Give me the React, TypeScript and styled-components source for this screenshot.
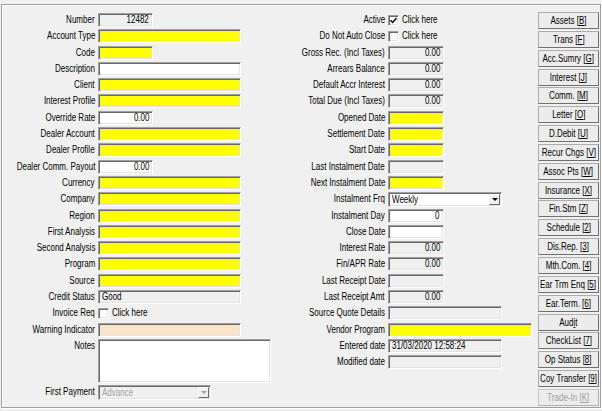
import React from 'react';
import styled, { createGlobalStyle } from 'styled-components';

type Tone = 'yellow' | 'white' | 'gray' | 'peach';
type Origin = 'left' | 'right' | 'center';

const tones: Record<Tone, string> = {
  yellow: '#ffff00',
  white: '#ffffff',
  gray: '#f0f0f0',
  peach: '#fce4c8',
};

const GlobalStyle = createGlobalStyle`
  html, body {
    margin: 0;
    padding: 0;
    background: #f0f0f0;
  }
  body {
    font-family: "Liberation Sans", Arial, sans-serif;
    font-size: 10px;
    color: #000;
  }
`;

const Page = styled.div`
  width: 602px;
  height: 411px;
  box-sizing: border-box;
  padding: 4px 1px 3px 1px;
  background: #f0f0f0;
`;

const Frame = styled.div`
  height: 100%;
  box-sizing: border-box;
  border: 1px solid #a0a0a0;
  box-shadow: inset 1px 1px 0 #fff, 1px 1px 0 #fff;
  display: flex;
`;

const Column = styled.div<{ $w: number }>`
  width: ${(p) => p.$w}px;
  flex-shrink: 0;
  display: flex;
  flex-direction: column;
  gap: 2.3px;
  padding-top: 8px;
`;

// the dialog font is narrower than Arial: squeeze text horizontally
const Txt = styled.span<{ $o?: Origin }>`
  display: inline-block;
  white-space: nowrap;
  transform: scaleX(0.8);
  transform-origin: ${(p) => p.$o ?? 'left'} center;
`;

const Row = styled.div<{ $h?: number; $top?: boolean }>`
  display: flex;
  align-items: ${(p) => (p.$top ? 'flex-start' : 'center')};
  height: ${(p) => p.$h ?? 14}px;
  flex-shrink: 0;
`;

const Label = styled.div<{ $w: number }>`
  width: ${(p) => p.$w}px;
  height: 14px;
  flex-shrink: 0;
  margin-right: 3px;
  display: flex;
  align-items: center;
  justify-content: flex-end;
  white-space: nowrap;
  line-height: 14px;
`;

const Field = styled.div<{ $w: number; $tone: Tone; $right?: boolean; $h?: number }>`
  width: ${(p) => p.$w}px;
  height: ${(p) => p.$h ?? 14}px;
  box-sizing: border-box;
  background: ${(p) => tones[p.$tone]};
  border: 1px solid;
  border-color: #a0a0a0 #fff #fff #a0a0a0;
  box-shadow: inset 1px 1px 0 #696969, inset -1px -1px 0 #e3e3e3;
  padding: 0 3px 0 3px;
  line-height: 12px;
  text-align: ${(p) => (p.$right ? 'right' : 'left')};
  white-space: nowrap;
  overflow: hidden;
`;

const Combo = styled.div<{ $w: number; $disabled?: boolean }>`
  width: ${(p) => p.$w}px;
  height: 15px;
  box-sizing: border-box;
  display: flex;
  align-items: stretch;
  background: ${(p) => (p.$disabled ? '#f0f0f0' : '#fff')};
  color: ${(p) => (p.$disabled ? '#a0a0a0' : '#000')};
  border: 1px solid;
  border-color: #a0a0a0 #fff #fff #a0a0a0;
  box-shadow: inset 1px 1px 0 #696969, inset -1px -1px 0 #e3e3e3;
  padding: 1px;
`;

const ComboText = styled.div`
  flex: 1;
  padding-left: 2px;
  line-height: 11px;
  white-space: nowrap;
`;

const ComboButton = styled.div<{ $disabled?: boolean }>`
  width: 11px;
  box-sizing: border-box;
  background: #f0f0f0;
  border: 1px solid;
  border-color: #fff #696969 #696969 #fff;
  display: flex;
  align-items: center;
  justify-content: center;

  &::after {
    content: '';
    border-left: 3px solid transparent;
    border-right: 3px solid transparent;
    border-top: 3px solid ${(p) => (p.$disabled ? '#a0a0a0' : '#000')};
  }
`;

const Check = styled.div`
  width: 11px;
  height: 11px;
  box-sizing: border-box;
  background: #fff;
  border: 1px solid;
  border-color: #a0a0a0 #fff #fff #a0a0a0;
  box-shadow: inset 1px 1px 0 #696969, inset -1px -1px 0 #e3e3e3;
  margin-right: 3px;
  display: flex;
  align-items: center;
  justify-content: center;
`;

const CheckText = styled.span`
  line-height: 14px;
`;

const Notes = styled(Field)`
  margin-bottom: 0.7px;
`;

const ButtonColumn = styled.div`
  width: 61px;
  flex-shrink: 0;
  display: flex;
  flex-direction: column;
  gap: 1.85px;
  padding-top: 7px;
`;

const Button = styled.div<{ $disabled?: boolean }>`
  height: 17px;
  box-sizing: border-box;
  background: #ececec;
  border: 1px solid;
  border-color: ${(p) => (p.$disabled ? '#c4c4c4 #b0b0b0 #b0b0b0 #c4c4c4' : '#adadad #707070 #707070 #adadad')};
  color: ${(p) => (p.$disabled ? '#a0a0a0' : '#000')};
  display: flex;
  align-items: center;
  justify-content: center;
  white-space: nowrap;
  overflow: hidden;
  font-size: 10px;
`;

type Item =
  | { label: string; kind: 'field'; w: number; tone: Tone; value?: string; right?: boolean }
  | { label: string; kind: 'check'; checked?: boolean }
  | { label: string; kind: 'combo'; w: number; value: string; disabled?: boolean }
  | { label: string; kind: 'notes' };

const leftItems: Item[] = [
  { label: 'Number', kind: 'field', w: 55, tone: 'gray', value: '12482', right: true },
  { label: 'Account Type', kind: 'field', w: 143, tone: 'yellow' },
  { label: 'Code', kind: 'field', w: 55, tone: 'yellow' },
  { label: 'Description', kind: 'field', w: 143, tone: 'white' },
  { label: 'Client', kind: 'field', w: 143, tone: 'yellow' },
  { label: 'Interest Profile', kind: 'field', w: 143, tone: 'yellow' },
  { label: 'Override Rate', kind: 'field', w: 55, tone: 'white', value: '0.00', right: true },
  { label: 'Dealer Account', kind: 'field', w: 143, tone: 'yellow' },
  { label: 'Dealer Profile', kind: 'field', w: 143, tone: 'yellow' },
  { label: 'Dealer Comm. Payout', kind: 'field', w: 55, tone: 'white', value: '0.00', right: true },
  { label: 'Currency', kind: 'field', w: 143, tone: 'yellow' },
  { label: 'Company', kind: 'field', w: 143, tone: 'yellow' },
  { label: 'Region', kind: 'field', w: 143, tone: 'yellow' },
  { label: 'First Analysis', kind: 'field', w: 143, tone: 'yellow' },
  { label: 'Second Analysis', kind: 'field', w: 143, tone: 'yellow' },
  { label: 'Program', kind: 'field', w: 143, tone: 'yellow' },
  { label: 'Source', kind: 'field', w: 143, tone: 'yellow' },
  { label: 'Credit Status', kind: 'field', w: 143, tone: 'gray', value: 'Good' },
  { label: 'Invoice Req', kind: 'check' },
  { label: 'Warning Indicator', kind: 'field', w: 143, tone: 'peach' },
  { label: 'Notes', kind: 'notes' },
  { label: 'First Payment', kind: 'combo', w: 113, value: 'Advance', disabled: true },
];

const midItems: Item[] = [
  { label: 'Active', kind: 'check', checked: true },
  { label: 'Do Not Auto Close', kind: 'check' },
  { label: 'Gross Rec. (Incl Taxes)', kind: 'field', w: 56, tone: 'gray', value: '0.00', right: true },
  { label: 'Arrears Balance', kind: 'field', w: 56, tone: 'gray', value: '0.00', right: true },
  { label: 'Default Accr Interest', kind: 'field', w: 56, tone: 'gray', value: '0.00', right: true },
  { label: 'Total Due (Incl Taxes)', kind: 'field', w: 56, tone: 'gray', value: '0.00', right: true },
  { label: 'Opened Date', kind: 'field', w: 56, tone: 'yellow' },
  { label: 'Settlement Date', kind: 'field', w: 56, tone: 'yellow' },
  { label: 'Start Date', kind: 'field', w: 56, tone: 'yellow' },
  { label: 'Last Instalment Date', kind: 'field', w: 56, tone: 'gray' },
  { label: 'Next Instalment Date', kind: 'field', w: 56, tone: 'yellow' },
  { label: 'Instalment Frq', kind: 'combo', w: 114, value: 'Weekly' },
  { label: 'Instalment Day', kind: 'field', w: 56, tone: 'white', value: '0', right: true },
  { label: 'Close Date', kind: 'field', w: 56, tone: 'white' },
  { label: 'Interest Rate', kind: 'field', w: 56, tone: 'gray', value: '0.00', right: true },
  { label: 'Fin/APR Rate', kind: 'field', w: 56, tone: 'gray', value: '0.00', right: true },
  { label: 'Last Receipt Date', kind: 'field', w: 56, tone: 'gray' },
  { label: 'Last Receipt Amt', kind: 'field', w: 56, tone: 'gray', value: '0.00', right: true },
  { label: 'Source Quote Details', kind: 'field', w: 114, tone: 'gray' },
  { label: 'Vendor Program', kind: 'field', w: 144, tone: 'yellow' },
  { label: 'Entered date', kind: 'field', w: 114, tone: 'gray', value: '31/03/2020 12:58:24' },
  { label: 'Modified date', kind: 'field', w: 114, tone: 'gray' },
];

// [text before, underlined key, text after]
const buttons: [string, string, string][] = [
  ['Assets [', 'B', ']'],
  ['Trans [', 'F', ']'],
  ['Acc.Sumry [', 'G', ']'],
  ['Interest [', 'J', ']'],
  ['Comm. [', 'M', ']'],
  ['Letter [', 'O', ']'],
  ['D.Debit [', 'U', ']'],
  ['Recur Chgs [', 'V', ']'],
  ['Assoc Pts [', 'W', ']'],
  ['Insurance [', 'X', ']'],
  ['Fin.Stm [', 'Z', ']'],
  ['Schedule [', '2', ']'],
  ['Dis.Rep. [', '3', ']'],
  ['Mth.Com. [', '4', ']'],
  ['Ear Trm Enq [', '5', ']'],
  ['Ear.Term. [', '6', ']'],
  ['Aud', 'i', 't'],
  ['CheckList [', '7', ']'],
  ['Op Status [', '8', ']'],
  ['Coy Transfer [', '9', ']'],
  ['Trade-In [', 'K', ']'],
];

const Tick = () => (
  <svg width="7" height="7" viewBox="0 0 7 7">
    <path d="M0.5 3.2 L2.6 5.4 L6.5 1" stroke="#000" strokeWidth="1.4" fill="none" />
  </svg>
);

const FormRow: React.FC<{ item: Item; labelWidth: number }> = ({ item, labelWidth }) => {
  const label = (
    <Label $w={labelWidth}>
      <Txt $o="right">{item.label}</Txt>
    </Label>
  );
  if (item.kind === 'notes') {
    return (
      <Row $h={44} $top>
        {label}
        <Notes $w={173} $h={44} $tone="white" />
      </Row>
    );
  }
  return (
    <Row>
      {label}
      {item.kind === 'field' && (
        <Field $w={item.w} $tone={item.tone} $right={item.right}>
          {item.value && <Txt $o={item.right ? 'right' : 'left'}>{item.value}</Txt>}
        </Field>
      )}
      {item.kind === 'check' && (
        <>
          <Check>{item.checked && <Tick />}</Check>
          <CheckText>
            <Txt>Click here</Txt>
          </CheckText>
        </>
      )}
      {item.kind === 'combo' && (
        <Combo $w={item.w} $disabled={item.disabled}>
          <ComboText>
            <Txt>{item.value}</Txt>
          </ComboText>
          <ComboButton $disabled={item.disabled} />
        </Combo>
      )}
    </Row>
  );
};

export default function App() {
  return (
    <>
      <GlobalStyle />
      <Page>
        <Frame>
          <Column $w={272}>
            {leftItems.map((it) => (
              <FormRow key={it.label} item={it} labelWidth={93} />
            ))}
          </Column>
          <Column $w={264}>
            {midItems.map((it) => (
              <FormRow key={it.label} item={it} labelWidth={111} />
            ))}
          </Column>
          <ButtonColumn>
            {buttons.map(([a, k, b], i) => (
              <Button key={a + k} $disabled={i === buttons.length - 1}>
                <Txt $o="center">
                  {a}
                  <u>{k}</u>
                  {b}
                </Txt>
              </Button>
            ))}
          </ButtonColumn>
        </Frame>
      </Page>
    </>
  );
}
